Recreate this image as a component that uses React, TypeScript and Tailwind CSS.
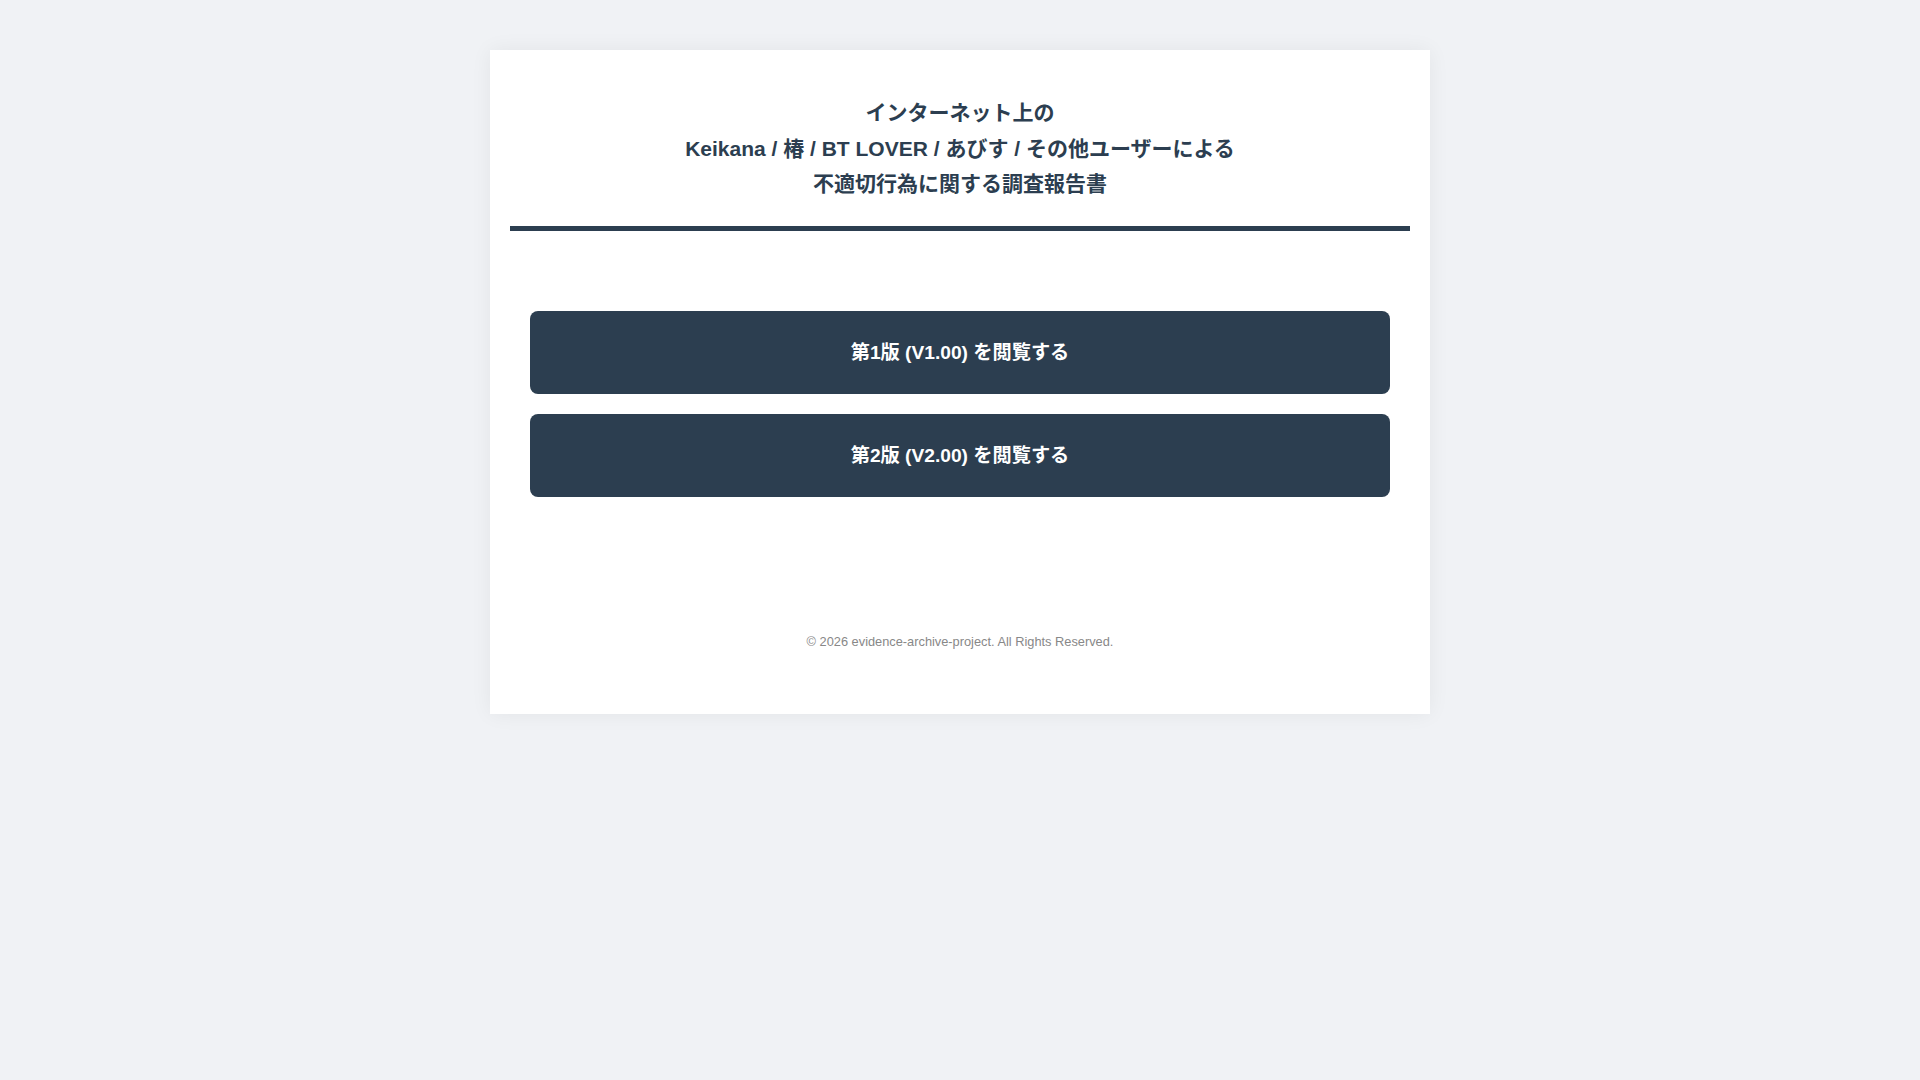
import React from "react";

const FONT = "font-['Liberation_Sans','Noto_Sans_CJK_JP',sans-serif]";

const versions = [
  { label: "第1版 (V1.00) を閲覧する", href: "#v1" },
  { label: "第2版 (V2.00) を閲覧する", href: "#v2" },
];

export default function App() {
  return (
    <div className={`min-h-screen bg-[#f0f2f5] pt-[50px] ${FONT}`}>
      <div className="mx-auto w-[940px] bg-white p-5 shadow-[0_0_20px_rgba(0,0,0,0.06)]">
        {/* タイトル */}
        <header className="border-b-[5px] border-[#2c3e50] pt-[25px] pb-[24px] text-center">
          <h1 className="text-[21px] font-bold leading-[35.5px] text-[#2c3e50]">
            インターネット上の
            <br />
            Keikana / 椿 / BT LOVER / あびす / その他ユーザーによる
            <br />
            不適切行為に関する調査報告書
          </h1>
        </header>

        <main className="flex flex-col gap-5 px-5 pt-[80px]">
          {versions.map(v => (
            <a
              key={v.href}
              href={v.href}
              className="block rounded-lg bg-[#2c3e50] py-[25px] text-center text-[19.2px] font-bold leading-[33px] text-white hover:bg-[#34495e]"
            >
              {v.label}
            </a>
          ))}
        </main>

        <footer className="pt-[135px] pb-[42px] text-center text-[12.8px] leading-5 text-[#888]">
          © 2026 evidence-archive-project. All Rights Reserved.
        </footer>
      </div>
    </div>
  );
}
